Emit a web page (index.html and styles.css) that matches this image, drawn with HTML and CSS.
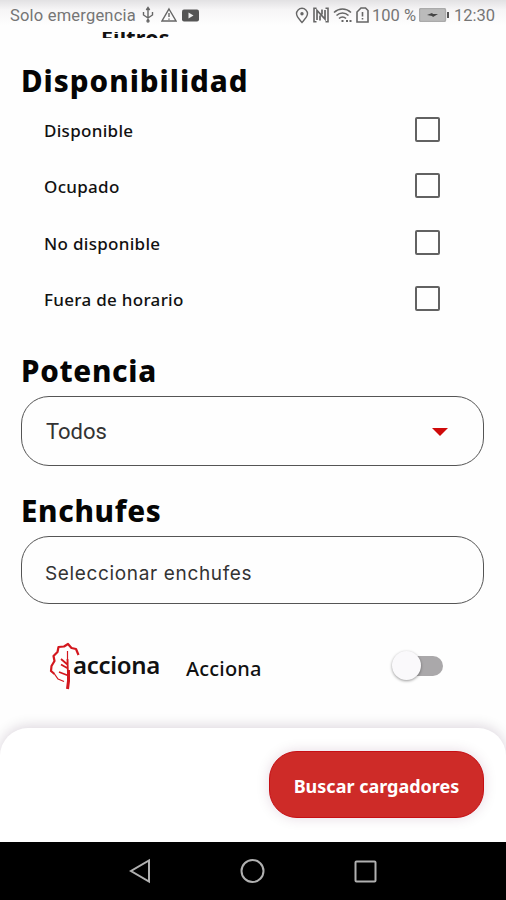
FILE: index.html
```html
<!DOCTYPE html>
<html lang="es">
<head>
<meta charset="utf-8">
<meta name="viewport" content="width=device-width, initial-scale=1">
<title>Filtros</title>
<link rel="stylesheet" href="styles.css">
</head>
<body>
<div class="phone">
  <header class="status">
    <span class="carrier">Solo emergencia</span>
    <svg class="usb" width="14" height="18" viewBox="0 0 14 18"><path d="M7 2v13M2.500 6v3L7 12l4.500-3V6M5.300 4 7 1.500 8.700 4"/><circle cx="7" cy="15" r="1"/></svg>
    <svg class="warn" width="16" height="16" viewBox="0 0 16 16"><path d="M8 2 15 14H1ZM8 6v4M8 11.500v1.200"/></svg>
    <svg class="video" width="17" height="13" viewBox="0 0 17 13"><rect width="17" height="12" y=".5" rx="2" fill="#555"/><path d="M6.500 3.500v6l5-3z" fill="#eee" stroke="none"/></svg>
    <span class="spacer"></span>
    <svg class="pin" width="14" height="17" viewBox="0 0 14 17"><path d="M7 15.500C3.500 11.500 1.500 9.500 1.500 6.800a5.500 5.500 0 0 1 11 0C12.500 9.500 10.500 11.500 7 15.500Z"/><circle cx="7" cy="6.800" r="1" fill="#666"/></svg>
    <svg class="nfc" width="16" height="16" viewBox="0 0 16 16"><path stroke-width="1.600" d="M3.500 1.200H1v13.600h2.500M12.500 14.800H15V1.200h-2.500"/><path stroke-width="1.700" d="M4 13V3.500l8 8.500V3M7 13.500v-5M9 2.500v5"/></svg>
    <svg class="wifi" width="20" height="16" viewBox="0 0 20 16"><path stroke-width="1.600" d="M1 5.500c5-4.600 12-4.600 17 0M3.500 8.500c3.500-3.300 8.500-3.300 12 0M6 11.500c2-1.900 5-1.900 7 0"/><path stroke-width="2" d="M8.500 14h2M13 14h2M16.500 14h2"/></svg>
    <svg class="sim" width="13" height="16" viewBox="0 0 13 16"><path stroke-width="1.600" d="M1 5 5 1h4.500L12 3.500V15H1ZM6.500 5v4.500M6.500 11v1.500"/></svg>
    <span class="charge">100 %</span>
    <svg class="battery" width="31" height="14" viewBox="0 0 31 14"><rect x=".5" y=".5" width="26" height="13" rx="1.500" fill="#bbb" stroke="#aaa"/><path d="m8 7 5-2 1 1h5l-5 3-1-1z" fill="#444" stroke="none"/><path stroke="#555" stroke-width="2" d="M29 4v6"/></svg>
    <span class="clock">12:30</span>
  </header>

  <main class="filters">
    <div class="scrolled-title"><span>Filtros</span></div>
    <h2 class="heading availability">Disponibilidad</h2>
    <ul class="options">
      <li><span>Disponible</span><i class="box"></i></li>
      <li><span>Ocupado</span><i class="box"></i></li>
      <li><span>No disponible</span><i class="box"></i></li>
      <li><span>Fuera de horario</span><i class="box"></i></li>
    </ul>
    <h2 class="heading power">Potencia</h2>
    <div class="field select"><span>Todos</span><svg width="16" height="8" viewBox="0 0 16 8"><path d="M0 0h16L8 8z" fill="#cf0a0a"/></svg></div>
    <h2 class="heading plugs">Enchufes</h2>
    <div class="field picker"><span>Seleccionar enchufes</span></div>
    <div class="provider">
      <svg class="leaf" width="34" height="48" viewBox="0 0 34 48"><g fill="none" stroke="#d3171e" stroke-linejoin="round"><path stroke-width="2.200" d="M30.500 13 28 7 23.500 6 20 2 16 4.500 10.500 5 9.500 10 5.500 14 6.500 19 3.500 24 3 29 6.500 32"/><path stroke-width="1.300" d="m6.500 32 3.500 5 6 2.500"/><path stroke-width="1.200" d="M19.500 9v13"/><path stroke-width="1.800" d="m19.500 17 .5 17M13 17l7 6M13 22.500l7 4M11 30l9 3.500"/><path stroke-width="3" d="M20.500 28v11l-1 8"/></g></svg>
      <span class="brand">acciona</span>
      <span class="provider-name">Acciona</span>
      <span class="switch"><i class="knob"></i></span>
    </div>
  </main>

  <footer class="actions"><button class="search"><span>Buscar cargadores</span></button></footer>
  <nav class="nav">
    <svg width="24" height="26" viewBox="0 0 24 26"><path d="M21 2.500v21L3 13Z"/></svg>
    <svg width="26" height="26" viewBox="0 0 26 26"><circle cx="12.500" cy="13" r="11"/></svg>
    <svg width="24" height="24" viewBox="0 0 24 24"><rect x="1.500" y="2.500" width="20" height="20" rx="1"/></svg>
  </nav>
</div>
</body>
</html>
```
FILE: styles.css
```css
* { box-sizing: border-box; }
body { margin: 0; background: #fefefe; }
.phone { width: 506px; height: 900px; display: flex; flex-direction: column; overflow: hidden; font-family: "Noto Sans", sans-serif; color: #111; background: #fefefe; }
.phone span { white-space: nowrap; }

.status { height: 32px; flex: none; display: flex; align-items: center; padding: 0 10px; background: linear-gradient(#e2e1e3, #f6f5f6 30%, #fefefe 80%); font: 17px/20px Roboto, sans-serif; color: #757575; }
.status svg { fill: none; stroke: #666; stroke-width: 1.400; flex: none; margin-top: -2px; }
.carrier { width: 127px; font-size: 16.500px; letter-spacing: .2px; }
.status .usb { margin-left: 4px; }
.status .warn { margin-left: 6px; }
.status .video { margin-left: 5px; }
.video rect { stroke: none; }
.spacer { flex: 1; }
.status .nfc { margin-left: 4px; }
.status .wifi { margin-left: 4px; }
.status .sim { margin-left: 3px; }
.charge { margin-left: 3px; width: 44px; font-size: 16.500px; }
.status .battery { margin-left: 3px; }
.clock { margin-left: 4px; width: 42px; font-size: 16.500px; }

.filters { height: 696px; flex: none; display: flex; flex-direction: column; }
.scrolled-title { height: 6px; overflow: hidden; padding-left: 101px; font-size: 21.500px; font-weight: 700; line-height: 26px; flex: none; }
.scrolled-title span { display: block; margin-top: -7px; letter-spacing: .2px; }
.heading { margin: 0 0 0 21px; font-size: 29.500px; font-weight: 800; line-height: 42px; color: #050505; flex: none; letter-spacing: .7px; }
.availability { margin-top: 22px; letter-spacing: 1px; }
.options { list-style: none; margin: 0; padding: 0 66px 0 44px; position: relative; top: -1px; }
.options li { height: 56.500px; display: flex; align-items: center; justify-content: space-between; font-size: 17px; font-weight: 500; letter-spacing: .3px; }
.options span { padding-top: 2px; }
.box { width: 25px; height: 25px; border: 2px solid #626262; border-radius: 2px; }
.power { margin-top: 22px; }
.field { width: 463px; margin-left: 21px; border: 1px solid #555; border-radius: 28px; display: flex; align-items: center; justify-content: space-between; padding: 0 35px 0 24px; flex: none; }
.select { height: 70px; margin-top: 4px; font: 22px Roboto, sans-serif; color: #333; }
.select svg { margin-top: 2px; }
.plugs { margin-top: 24px; }
.picker { height: 68px; margin-top: 4px; padding-top: 7px; padding-left: 23px; font: 19px Inter, sans-serif; color: #333; letter-spacing: .65px; }
.provider { height: 56px; margin-top: 34px; padding-left: 48px; display: flex; align-items: center; flex: none; }
.leaf { flex: none; }
.brand { margin-left: -9px; width: 86px; font-size: 24px; font-weight: 600; line-height: 30px; letter-spacing: -.3px; margin-top: -3px; }
.provider-name { margin-left: 27px; width: 76px; font-size: 20px; font-weight: 500; margin-top: 4px; letter-spacing: .2px; }
.switch { width: 50px; height: 30px; margin-left: 132px; display: flex; align-items: center; position: relative; }
.switch::before { content: ""; width: 36px; height: 20px; margin-left: 13px; border-radius: 10px; background: #aaa8aa; }
.knob { position: absolute; left: -2px; top: 0; width: 29px; height: 29px; border-radius: 50%; background: #faf9fb; box-shadow: 0 1px 3px #0006; }

.actions { height: 114px; flex: none; padding: 23px 22px 0; display: flex; justify-content: flex-end; background: #fff; border-radius: 28px 28px 0 0; box-shadow: 0 -2px 13px #2a003029; }
.search { width: 215px; height: 67px; border: 1px solid #c60f14; border-radius: 28px; background: #ce2b28; color: #fff; font: 700 18px "Noto Sans", sans-serif; box-shadow: 0 0 13px #50004026; padding: 3px 0 0; display: flex; align-items: center; justify-content: center; }
.nav { height: 58px; flex: none; background: #000; display: flex; align-items: center; justify-content: center; gap: 88px; }
.nav svg { fill: none; stroke: #b0b0b0; stroke-width: 2; }
```
